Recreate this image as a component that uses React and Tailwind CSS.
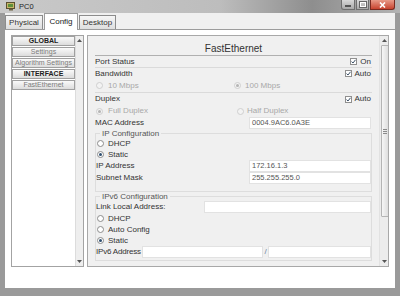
import React from 'react';

const TABS = [
  { label: 'Physical', w: 'w-[38px]' },
  { label: 'Config', w: 'w-[34px]', active: true },
  { label: 'Desktop', w: 'w-[37px]' },
];

const SIDE = [
  { label: 'GLOBAL', bold: true },
  { label: 'Settings' },
  { label: 'Algorithm Settings' },
  { label: 'INTERFACE', bold: true },
  { label: 'FastEthernet' },
];

function Radio({ checked, disabled }) {
  return (
    <span
      className={`w-[7px] h-[7px] rounded-full border shrink-0 flex items-center justify-center ${
        disabled ? 'border-[#cfcfcf] bg-[#f3f3f3]' : 'border-[#8c8c8c] bg-white'
      }`}
    >
      {checked && (
        <span className={`w-[3px] h-[3px] rounded-full ${disabled ? 'bg-[#b4b4b4]' : 'bg-[#2f4f70]'}`} />
      )}
    </span>
  );
}

function Check({ label }) {
  return (
    <div className="ml-auto flex items-center gap-[3px] mr-[1px]">
      <span className="w-[7px] h-[7px] border border-[#8f8f8f] bg-white flex items-center justify-center">
        <svg width="5" height="5" viewBox="0 0 5 5">
          <path d="M0.5 2.6 L2 4 L4.5 0.8" fill="none" stroke="#3b4f66" strokeWidth="1" />
        </svg>
      </span>
      <span>{label}</span>
    </div>
  );
}

function Field({ value = '', w }) {
  return (
    <div className={`${w} h-[12px] shrink-0 bg-white border border-[#e2e2e2] flex items-center pl-[2px] text-[7.5px] text-[#555]`}>
      {value}
    </div>
  );
}

function Arrow({ up }) {
  return (
    <svg width="5" height="3" viewBox="0 0 5 3">
      <path d={up ? 'M0 3 L2.5 0 L5 3 Z' : 'M0 0 L2.5 3 L5 0 Z'} fill="#555" />
    </svg>
  );
}

export default function App() {
  return (
    <div className="w-[400px] h-[296px] bg-[#9a9a9a] flex flex-col font-['Liberation_Sans',Arial,sans-serif] text-[8px] text-[#333] overflow-hidden">
      {/* Title bar */}
      <div className="h-[13px] shrink-0 flex items-start bg-[linear-gradient(to_right,#c9c9c9,#bdbdbd_55%,#8e8e8e_78%,#b3b3b3)]">
        <svg className="ml-[6px] mt-[2px]" width="10" height="9" viewBox="0 0 10 9">
          <rect x="0.5" y="0.5" width="8" height="6" fill="#c8b66a" stroke="#5a5030" />
          <rect x="2" y="2" width="5" height="3" fill="#5f8f3a" />
          <rect x="3" y="7" width="4" height="1.5" fill="#6a6040" />
        </svg>
        <span className="ml-[3px] mt-[2px] text-[7.5px] leading-[9px] text-[#222]">PC0</span>
        <div className="ml-auto mr-[5px] flex gap-[1px]">
          <div className="w-[14px] h-[10px] rounded-bl-[3px] border border-t-0 border-[#6f6f6f] bg-[linear-gradient(#d8d8d8,#a9a9a9)] flex items-end justify-center pb-[2px]">
            <span className="w-[6px] h-[2px] bg-white border border-[#555]" />
          </div>
          <div className="w-[13px] h-[10px] border border-t-0 border-[#6f6f6f] bg-[linear-gradient(#d8d8d8,#a9a9a9)] flex items-center justify-center">
            <span className="w-[6px] h-[5px] border border-white outline outline-1 outline-[#666]" />
          </div>
          <div className="w-[25px] h-[10px] rounded-br-[3px] border border-t-0 border-[#7a2a20] bg-[linear-gradient(#e89a88,#c8432f)] flex items-center justify-center">
            <svg width="7" height="6" viewBox="0 0 7 6">
              <path d="M1 0.5 L6 5.5 M6 0.5 L1 5.5" stroke="white" strokeWidth="1.6" />
            </svg>
          </div>
        </div>
      </div>

      {/* Window body */}
      <div className="flex-1 flex flex-col px-[5px] pb-[8px]">
        <div className="flex-1 bg-white flex flex-col">
          {/* Tabs */}
          <div className="h-[17px] shrink-0 bg-[#f0f0f0] border-b border-[#9c9c9c] flex items-end gap-[1px]">
            {TABS.map((t) => (
              <div
                key={t.label}
                className={`${t.w} flex items-center justify-center border border-b-0 ${
                  t.active
                    ? 'h-[17px] -mb-px bg-white border-[#9c9c9c] text-[#222]'
                    : 'h-[14px] bg-[linear-gradient(#f6f6f6,#dedede)] border-[#8c8c8c] text-[#333]'
                }`}
              >
                {t.label}
              </div>
            ))}
          </div>

          {/* Content */}
          <div className="flex pt-[5px] pl-[6px] pr-[6px] gap-[3px]">
            {/* Left list */}
            <div className="w-[73px] h-[232px] border border-[#a3a3a3] bg-white flex">
              <div className="flex-1 flex flex-col gap-px">
                {SIDE.map((s) => (
                  <div
                    key={s.label}
                    className={`h-[10px] border border-[#a0a0a0] bg-[linear-gradient(#fafafa,#dcdcdc)] flex items-center justify-center text-[7px] leading-[8px] whitespace-nowrap ${
                      s.bold ? 'font-bold text-[#222]' : 'text-[#7c7c7c]'
                    }`}
                  >
                    {s.label}
                  </div>
                ))}
              </div>
              <div className="w-[8px] border-l border-[#dcdcdc] bg-[#eeeeee] flex flex-col items-center justify-between py-[3px]">
                <Arrow up />
                <Arrow />
              </div>
            </div>

            {/* Main panel */}
            <div className="w-[302px] h-[232px] border border-[#a8a8a8] bg-[#f0f0f0] flex overflow-hidden">
              <div className="flex-1 px-[7px] flex flex-col">
                <div className="h-[20px] shrink-0 border-b border-[#b0b0b0] flex items-end justify-center pb-[1px] text-[10px] leading-[11px] text-[#333]">
                  FastEthernet
                </div>
                <div className="h-[12px] shrink-0 border-b border-[#dadada] flex items-center">
                  <span>Port Status</span>
                  <Check label="On" />
                </div>
                <div className="h-[11px] shrink-0 flex items-center">
                  <span>Bandwidth</span>
                  <Check label="Auto" />
                </div>
                <div className="h-[14px] shrink-0 border-b border-[#dadada] flex items-center text-[#a8a8a8]">
                  <div className="w-[139px] flex items-center gap-[5px] pl-[1px]">
                    <Radio disabled />
                    <span>10 Mbps</span>
                  </div>
                  <div className="flex items-center gap-[4px]">
                    <Radio disabled checked />
                    <span>100 Mbps</span>
                  </div>
                </div>
                <div className="h-[12px] shrink-0 flex items-center">
                  <span>Duplex</span>
                  <Check label="Auto" />
                </div>
                <div className="h-[12px] shrink-0 flex items-center text-[#a8a8a8]">
                  <div className="w-[142px] flex items-center gap-[5px] pl-[1px]">
                    <Radio disabled checked />
                    <span>Full Duplex</span>
                  </div>
                  <div className="flex items-center gap-[3px]">
                    <Radio disabled />
                    <span>Half Duplex</span>
                  </div>
                </div>
                <div className="h-[12px] shrink-0 flex items-center justify-between pr-[1px]">
                  <span>MAC Address</span>
                  <Field w="w-[122px]" value="0004.9AC6.0A3E" />
                </div>

                <fieldset className="shrink-0 border border-[#dddddd] pb-[7px] pr-0">
                  <legend className="ml-[4px] px-[2px] leading-[9px] text-[#555]">IP Configuration</legend>
                  <div className="h-[11px] flex items-center gap-[4px] pl-[1px]">
                    <Radio />
                    <span>DHCP</span>
                  </div>
                  <div className="h-[11px] flex items-center gap-[4px] pl-[1px]">
                    <Radio checked />
                    <span>Static</span>
                  </div>
                  <div className="h-[12px] flex items-center justify-between">
                    <span>IP Address</span>
                    <Field w="w-[122px]" value="172.16.1.3" />
                  </div>
                  <div className="h-[12px] flex items-center justify-between">
                    <span>Subnet Mask</span>
                    <Field w="w-[122px]" value="255.255.255.0" />
                  </div>
                </fieldset>

                <fieldset className="shrink-0 border border-[#dddddd] pb-[2px]">
                  <legend className="ml-[4px] px-[2px] leading-[9px] text-[#555]">IPv6 Configuration</legend>
                  <div className="h-[12px] flex items-center justify-between">
                    <span>Link Local Address:</span>
                    <Field w="w-[167px]" />
                  </div>
                  <div className="h-[11px] flex items-center gap-[4px] pl-[1px]">
                    <Radio />
                    <span>DHCP</span>
                  </div>
                  <div className="h-[11px] flex items-center gap-[4px] pl-[1px]">
                    <Radio />
                    <span>Auto Config</span>
                  </div>
                  <div className="h-[11px] flex items-center gap-[4px] pl-[1px]">
                    <Radio checked />
                    <span>Static</span>
                  </div>
                  <div className="h-[12px] flex items-center">
                    <span className="w-[46px] shrink-0 whitespace-nowrap tracking-[-0.2px]">IPv6 Address</span>
                    <Field w="w-[121px]" />
                    <span className="w-[5px] shrink-0 text-center text-[#6a7fa0]">/</span>
                    <Field w="w-[103px]" />
                  </div>
                </fieldset>
              </div>

              {/* Scrollbar */}
              <div className="w-[10px] shrink-0 border-l border-[#e2e2e2] bg-[#ececec] flex flex-col items-center">
                <div className="h-[9px] flex items-center">
                  <Arrow up />
                </div>
                <div className="w-[8px] h-[172px] border border-[#b4b4b4] rounded-[1px] bg-[linear-gradient(to_right,#f6f6f6,#dedede)] flex flex-col items-center justify-center gap-px">
                  <span className="w-[4px] h-px bg-[#8a8a8a]" />
                  <span className="w-[4px] h-px bg-[#8a8a8a]" />
                  <span className="w-[4px] h-px bg-[#8a8a8a]" />
                </div>
                <div className="mt-auto h-[9px] flex items-center">
                  <Arrow />
                </div>
              </div>
            </div>
          </div>
        </div>
      </div>
    </div>
  );
}
